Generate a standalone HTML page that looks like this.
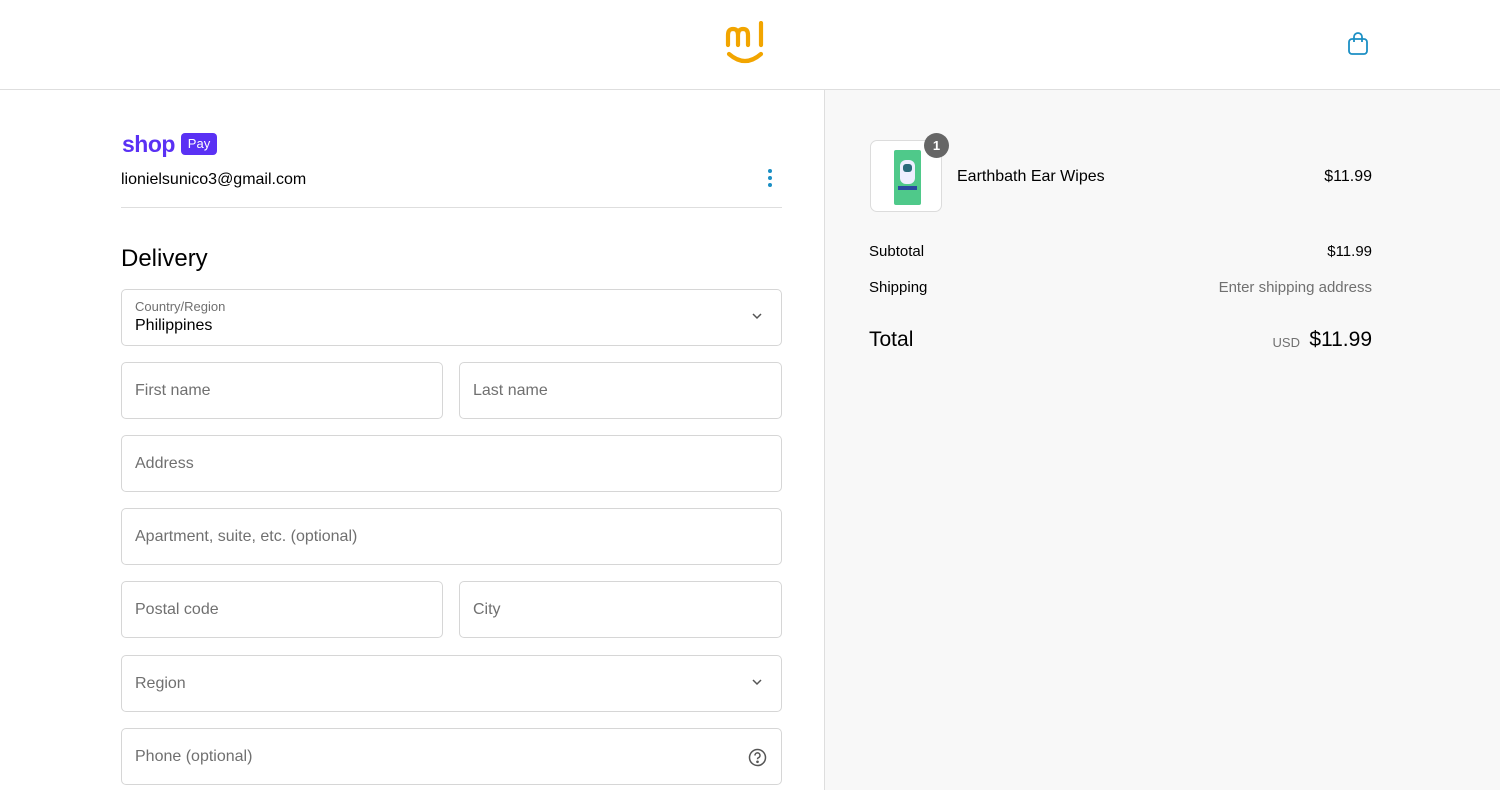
<!DOCTYPE html>
<html><head><meta charset="utf-8"><style>
*{box-sizing:border-box;margin:0;padding:0}
body{width:1500px;height:790px;overflow:hidden;font-family:"Liberation Sans",Arial,sans-serif;background:#fff;color:#000;position:relative}
.hdr{position:absolute;left:0;top:0;width:1500px;height:90px;border-bottom:1px solid #dedede;background:#fff}
.right{position:absolute;left:824px;top:90px;width:676px;height:700px;background:#f8f8f8;border-left:1px solid #dedede}
.f{position:absolute;border:1px solid #d6d6d6;border-radius:5px;background:#fff;height:57px;font-size:16px;color:#707070;padding-left:13px;display:flex;align-items:center}
.chev{position:absolute;right:18px;top:22px}
.t{position:absolute;font-size:16px}
</style></head><body>
<div class="hdr">
<svg style="position:absolute;left:724px;top:21px" width="44" height="44" viewBox="0 0 44 44">
<g fill="none" stroke="#f2a500" stroke-width="4.2" stroke-linecap="round">
<path d="M4 24V14q0-6 5-6q5 0 5 6v10M14 14q0-6 5-6q5 0 5 6v10"/>
<path d="M37 2v22"/>
<path d="M5 33q16 14 32 0"/></g></svg>
<svg style="position:absolute;left:1346px;top:31px" width="24" height="26" viewBox="0 0 24 26" fill="none" stroke="#1b8fc4" stroke-width="1.8"><rect x="3" y="8" width="18" height="15" rx="3"/><path d="M8 11V6a4 4 0 0 1 8 0v5"/></svg>
</div>
<div style="position:absolute;left:122px;top:131px;font-size:23px;font-weight:bold;color:#5a31f4;letter-spacing:-0.5px">shop</div>
<div style="position:absolute;left:181px;top:133px;width:36px;height:22px;background:#5a31f4;border-radius:4px;color:#fff;font-size:13px;text-align:center;line-height:22px">Pay</div>
<div class="t" style="left:121px;top:171px">lionielsunico3@gmail.com</div>
<svg style="position:absolute;left:766px;top:168px" width="8" height="20"><circle cx="4" cy="3" r="2" fill="#1b8fc4"/><circle cx="4" cy="10" r="2" fill="#1b8fc4"/><circle cx="4" cy="17" r="2" fill="#1b8fc4"/></svg>
<div style="position:absolute;left:121px;top:207px;width:661px;height:1px;background:#dedede"></div>
<div style="position:absolute;left:121px;top:245px;font-size:24px">Delivery</div>
<div class="f" style="left:121px;top:289px;width:661px;display:block;padding-top:9px"><div style="font-size:13px;color:#707070">Country/Region</div><div style="font-size:16px;color:#000;margin-top:3px">Philippines</div><svg class="chev" width="12" height="8"><path d="M2 2l4 4 4-4" fill="none" stroke="#555" stroke-width="1.5"/></svg></div>
<div class="f" style="left:121px;top:362px;width:322px">First name</div>
<div class="f" style="left:459px;top:362px;width:323px">Last name</div>
<div class="f" style="left:121px;top:435px;width:661px">Address</div>
<div class="f" style="left:121px;top:508px;width:661px">Apartment, suite, etc. (optional)</div>
<div class="f" style="left:121px;top:581px;width:322px">Postal code</div>
<div class="f" style="left:459px;top:581px;width:323px">City</div>
<div class="f" style="left:121px;top:655px;width:661px">Region<svg class="chev" width="12" height="8"><path d="M2 2l4 4 4-4" fill="none" stroke="#555" stroke-width="1.5"/></svg></div>
<div class="f" style="left:121px;top:728px;width:661px">Phone (optional)<svg style="position:absolute;right:14px;top:19px" width="19" height="19" viewBox="0 0 19 19" fill="none" stroke="#555" stroke-width="1.5"><circle cx="9.5" cy="9.5" r="8"/><path d="M7 7.5a2.5 2.5 0 1 1 3.2 2.3c-.6.3-.7.7-.7 1.5"/><circle cx="9.5" cy="13.8" r=".6" fill="#555"/></svg></div>
<div class="right">
<div style="position:absolute;left:45px;top:50px;width:72px;height:72px;border:1px solid #dcdcdc;border-radius:7px;background:#fff">
<div style="position:absolute;left:23px;top:9px;width:27px;height:55px;background:#4fc98a;border-radius:2px"><div style="position:absolute;left:6px;top:10px;width:15px;height:24px;background:#eef;border-radius:6px"></div><div style="position:absolute;left:9px;top:14px;width:9px;height:8px;background:#2a6a7a;border-radius:3px"></div><div style="position:absolute;left:4px;top:36px;width:19px;height:4px;background:#2a4aa0"></div></div></div>
<div style="position:absolute;left:99px;top:43px;width:25px;height:25px;border-radius:50%;background:#666;color:#fff;font-size:13px;font-weight:bold;text-align:center;line-height:25px">1</div>
<div class="t" style="left:132px;top:78px">Earthbath Ear Wipes</div>
<div class="t" style="right:128px;top:78px">$11.99</div>
<div class="t" style="left:44px;top:153px;font-size:15px">Subtotal</div>
<div class="t" style="right:128px;top:153px;font-size:15px">$11.99</div>
<div class="t" style="left:44px;top:189px;font-size:15px">Shipping</div>
<div class="t" style="right:128px;top:189px;font-size:15px;color:#707070">Enter shipping address</div>
<div class="t" style="left:44px;top:238px;font-size:21px">Total</div>
<div class="t" style="right:200px;top:245px;font-size:13px;color:#707070">USD</div>
<div class="t" style="right:128px;top:238px;font-size:21px">$11.99</div>
</div>
</body></html>
